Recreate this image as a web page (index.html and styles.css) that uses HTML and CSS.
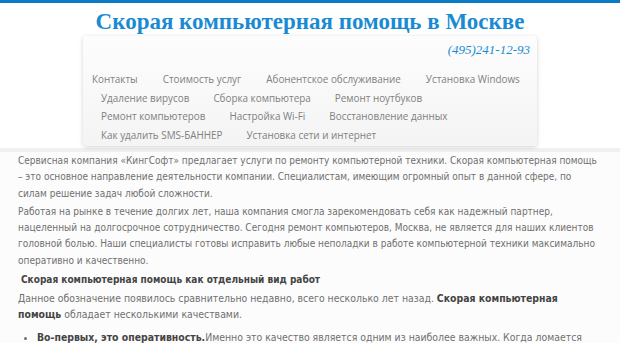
FILE: index.html
```html
<!DOCTYPE html>
<html lang="ru">
<head>
    <meta charset="UTF-8">
    <meta name="viewport" content="width=device-width, initial-scale=1.0">
    <title>Скорая компьютерная помощь в Москве</title>
    <link rel="stylesheet" href="styles.css">
</head>
<body>

    <div class="top-line"></div>

    <div class="header">
        <h1>Скорая компьютерная помощь в Москве</h1>

        <div class="menu-box">
            <div class="phone">(495)241-12-93</div>
            <ul class="menu first">
                <li><a href="#">Контакты</a></li>
                <li><a href="#">Стоимость услуг</a></li>
                <li><a href="#">Абонентское обслуживание</a></li>
                <li><a href="#">Установка Windows</a></li>
            </ul>
            <ul class="menu">
                <li><a href="#">Удаление вирусов</a></li>
                <li><a href="#">Сборка компьютера</a></li>
                <li><a href="#">Ремонт ноутбуков</a></li>
            </ul>
            <ul class="menu">
                <li><a href="#">Ремонт компьютеров</a></li>
                <li><a href="#">Настройка Wi-Fi</a></li>
                <li><a href="#">Восстановление данных</a></li>
            </ul>
            <ul class="menu">
                <li><a href="#">Как удалить SMS-БАННЕР</a></li>
                <li><a href="#">Установка сети и интернет</a></li>
            </ul>
        </div>
    </div>

    <div class="content">
        <p>Сервисная компания «КингСофт» предлагает услуги по ремонту компьютерной техники. Скорая компьютерная помощь – это основное направление деятельности компании. Специалистам, имеющим огромный опыт в данной сфере, по силам решение задач любой сложности.</p>

        <p>Работая на рынке в течение долгих лет, наша компания смогла зарекомендовать себя как надежный партнер, нацеленный на долгосрочное сотрудничество. Сегодня ремонт компьютеров, Москва, не является для наших клиентов головной болью. Наши специалисты готовы исправить любые неполадки в работе компьютерной техники максимально оперативно и качественно.</p>

        <h2>Скорая компьютерная помощь как отдельный вид работ</h2>

        <p class="big">Данное обозначение появилось сравнительно недавно, всего несколько лет назад. <b>Скорая компьютерная помощь</b> обладает несколькими качествами.</p>

        <ul class="list big">
            <li><b>Во-первых, это оперативность.</b>Именно это качество является одним из наиболее важных. Когда ломается компьютер, в большинстве случаев исправить это необходимо незамедлительно. Данная техника является неотъемлемой частью современной жизни, и зачастую из-за невозможности своевременно выполнить нужную работу возникают серьезные проблемы.</li>
        </ul>
    </div>

</body>
</html>
```

FILE: styles.css
```css
body {
    margin: 0;
    background-color: #fcfcfc;
    font-family: "DejaVu Sans", Verdana, sans-serif;
}
.top-line {
    height: 3px;
    background-color: #0a7bc4;
}
.header {
    background-color: #fff;
    padding-top: 5px;
    padding-bottom: 2px;
    border-bottom: 4px solid #f0f0f0;
}
h1 {
    margin: 0;
    text-align: center;
    font-family: "Liberation Serif", "Times New Roman", serif;
    font-size: 23px;
    font-weight: bold;
    color: #1a8bd2;
    line-height: 28px;
}
.menu-box {
    width: 454px;
    margin: 0 auto;
    padding: 6px 0 3px;
    background: linear-gradient(#fdfdfd, #f4f4f4);
    border-radius: 4px;
    box-shadow: 0 1px 4px rgba(0, 0, 0, 0.18);
}
.phone {
    text-align: right;
    padding-right: 7px;
    font-family: "Liberation Serif", serif;
    font-style: italic;
    font-size: 13px;
    color: #1a8bd2;
    height: 22px;
    line-height: 16px;
}
.menu {
    list-style: none;
    margin: 0;
    padding: 0 0 0 18px;
    display: flex;
    gap: 24px;
    height: 18.5px;
    line-height: 18px;
    white-space: nowrap;
}
.menu.first {
    padding-left: 9px;
    gap: 25px;
    margin-top: 5px;
}
.menu a {
    color: #808080;
    text-decoration: none;
    font-family: "Open Sans", sans-serif;
    font-size: 9.9px;
}
.content {
    padding: 1px 18px 0 18px;
    font-family: "DejaVu Sans Condensed", "DejaVu Sans", sans-serif;
    font-stretch: condensed;
    font-size: 10px;
    color: #707070;
    line-height: 16.3px;
}
.content p {
    margin: 0 0 2px;
}
.content .big {
    font-size: 10.4px;
}
.content b {
    color: #444;
}
h2 {
    margin: 3px 0 2px 3px;
    font-size: 10px;
    line-height: 16px;
    color: #444;
    font-weight: bold;
}
.list {
    margin: 6px 0 0;
    padding-left: 19px;
}
```
